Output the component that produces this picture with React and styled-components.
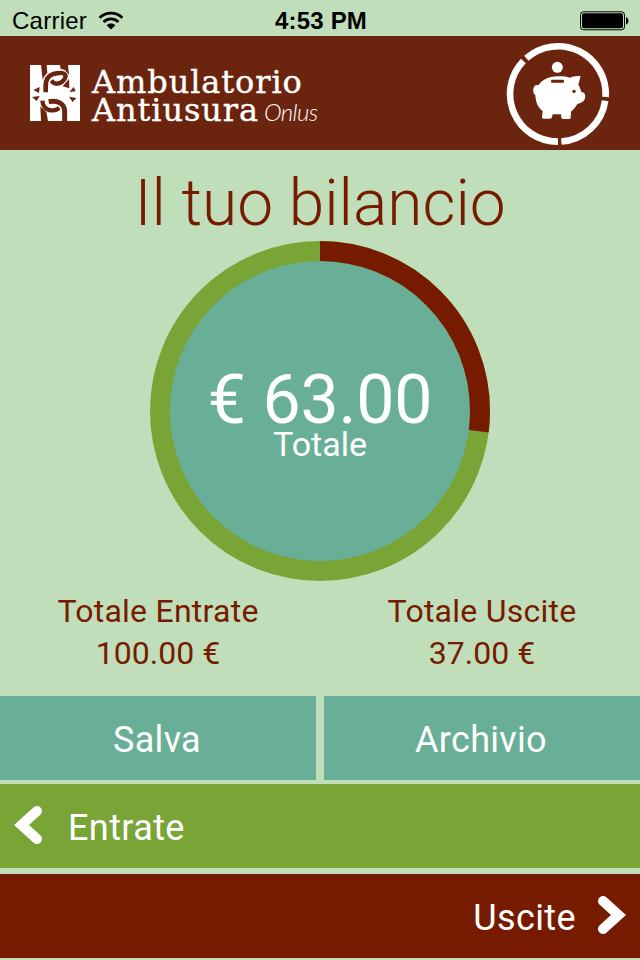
import React from "react";
import styled, { createGlobalStyle } from "styled-components";

const income = 100;
const expenses = 37;

const formatAmount = (value) => value.toFixed(2);

function WifiIcon() {
  return (
    <svg width="26" height="20" viewBox="0 0 26 20">
      <g fill="none" stroke="#000" strokeWidth="2.7">
        <path d="M1.6 6.7 C8 0.5 18 0.5 24.4 6.7" />
        <path d="M5.5 10.9 C10 6.8 16 6.8 20.5 10.9" />
      </g>
      <path d="M8.6 14.2 C11.2 11.9 14.8 11.9 17.4 14.2 L13 18.6 Z" />
    </svg>
  );
}

function BatteryIcon() {
  return (
    <svg width="50" height="20" viewBox="0 0 50 20">
      <rect x="0.5" y="0.8" width="44" height="18" rx="3" fill="none" stroke="#000" />
      <rect x="2" y="2.3" width="41" height="15" rx="1.8" />
      <path d="M46 6.2 C49.3 7 49.3 12.6 46 13.4 Z" />
    </svg>
  );
}

function ChainMark() {
  return (
    <svg width="50" height="56" viewBox="0 0 150 168">
      <rect width="150" height="168" fill="#fff" />
      <g fill="#6b240e">
        <path d="M33 0 H50 L52 24 L38 44 Z" />
        <path d="M90 0 H114 L117 30 L104 14 L92 12 Z" />
        <path d="M117 42 L118 70 L98 64 Z" />
        <path d="M31 124 L49 142 L54 168 H33 Z" />
        <path d="M10 75 L29 66 L27 84 Z" />
        <path d="M6 96 L29 93 L20 108 Z" />
        <path d="M118 81 L131 66 L137 79 Z" />
        <path d="M117 95 L139 99 L128 111 Z" />
      </g>
      <g fill="none">
        <path d="M64 46 C72 61 90 58 101 46 C113 32 104 21 88 24" stroke="#6b240e" strokeWidth="13" />
        <path d="M47 82 V62 C47 38 62 24 90 24" stroke="#fff" strokeWidth="23" />
        <path d="M47 82 V62 C47 38 62 24 90 24" stroke="#6b240e" strokeWidth="14" />
        <path d="M37 107 C38 124 48 135 64 136 C76 137 85 133 90 125" stroke="#6b240e" strokeWidth="13" />
        <path d="M104 168 V139 C103 115 83 105 56 110" stroke="#fff" strokeWidth="24" />
        <path d="M104 168 V139 C103 115 83 105 56 110" stroke="#6b240e" strokeWidth="15" />
      </g>
    </svg>
  );
}

function PiggyIcon() {
  return (
    <svg width="120" height="114" viewBox="0 0 360 342">
      <g fill="none" stroke="#fff" strokeWidth="20">
        <path d="M79 67 A143 143 0 0 1 316.9 183" />
        <path d="M315.4 194 A143 143 0 0 1 184 316.6" />
        <path d="M174 317 A143 143 0 0 1 70 75" />
      </g>
      <g fill="#fff">
        <circle cx="172" cy="94" r="16.5" />
        <path d="M115 148 C127 130 149 121 174 121 C190 121 202 122 210 125 C220 121 231 120 242 120 L235 146 C240 153 242 161 244 168 L252 170 C256 175 257 182 254 190 C251 198 241 202 232 204 C226 215 219 222 213 227 L212 245 Q212 249 207 249 H189 Q184 249 184 244 L183 235 H158 L156 244 Q155 248 150 248 H131 Q126 248 126 243 L128 225 C114 215 107 199 106 177 C97 174 97 149 109 147 Z" />
      </g>
      <rect x="153" y="131" width="39" height="9" rx="3" fill="#6b240e" />
      <circle cx="222" cy="166" r="5" fill="#6b240e" />
    </svg>
  );
}

function Chevron({ flip }) {
  return (
    <svg width="28" height="38" viewBox="0 0 28 38">
      <path
        d="M23 5 L7.5 19 L23 33"
        transform={flip ? "translate(28 0) scale(-1 1)" : undefined}
        fill="none"
        stroke="#fff"
        strokeWidth="10"
        strokeLinecap="round"
        strokeLinejoin="miter"
      />
    </svg>
  );
}

function BalanceRing({ share }) {
  const radius = 160;
  const length = 2 * Math.PI * radius;

  return (
    <svg width="340" height="340" viewBox="0 0 340 340">
      <circle cx="170" cy="170" r="151" fill="#69ae96" />
      <circle cx="170" cy="170" r={radius} fill="none" stroke="#79a537" strokeWidth="20" />
      <circle
        cx="170"
        cy="170"
        r={radius}
        fill="none"
        stroke="#771b00"
        strokeWidth="20"
        strokeDasharray={`${length * share} ${length}`}
        transform="rotate(-90 170 170)"
      />
    </svg>
  );
}

function App() {
  return (
    <Screen>
      <GlobalStyle />
      <StatusBar>
        <Carrier>
          <span>Carrier</span>
          <WifiIcon />
        </Carrier>
        <Clock>4:53 PM</Clock>
        <Battery>
          <BatteryIcon />
        </Battery>
      </StatusBar>
      <Header>
        <Brand>
          <ChainMark />
          <BrandName>
            <BrandLine>Ambulatorio</BrandLine>
            <BrandLine>
              Antiusura<Onlus>Onlus</Onlus>
            </BrandLine>
          </BrandName>
        </Brand>
        <PiggyIcon />
      </Header>
      <Title>Il tuo bilancio</Title>
      <Balance>
        <BalanceRing share={expenses / (income + expenses)} />
        <BalanceText>
          <BalanceAmount>€ {formatAmount(income - expenses)}</BalanceAmount>
          <BalanceLabel>Totale</BalanceLabel>
        </BalanceText>
      </Balance>
      <Totals>
        <Total>
          <p>Totale Entrate</p>
          <p>{formatAmount(income)} €</p>
        </Total>
        <Total>
          <p>Totale Uscite</p>
          <p>{formatAmount(expenses)} €</p>
        </Total>
      </Totals>
      <Actions>
        <ActionButton>Salva</ActionButton>
        <ActionButton>Archivio</ActionButton>
      </Actions>
      <NavRow $color="#79a537">
        <Chevron />
        <span>Entrate</span>
      </NavRow>
      <NavRow $color="#771b00" $end>
        <span>Uscite</span>
        <Chevron flip />
      </NavRow>
    </Screen>
  );
}

export default App;

const GlobalStyle = createGlobalStyle`
  * {
    box-sizing: border-box;
    margin: 0;
    padding: 0;
  }

  body {
    background: #c0deb9;
    font-family: Roboto, sans-serif;
  }

  svg {
    display: block;
    flex-shrink: 0;
  }
`;

const Screen = styled.div`
  display: flex;
  flex-direction: column;
  width: 640px;
  height: 960px;
  overflow: hidden;
  background: #c0deb9;
`;

const StatusBar = styled.div`
  display: grid;
  grid-template-columns: 1fr auto 1fr;
  align-items: center;
  height: 36px;
  padding: 5px 10px 0 12px;
  color: #000;
  font: 24px/30px "Liberation Sans", sans-serif;
`;

const Carrier = styled.div`
  display: flex;
  align-items: center;
  gap: 11px;
  letter-spacing: 0.25px;
`;

const Clock = styled.div`
  font-weight: bold;
  letter-spacing: 0.2px;
`;

const Battery = styled.div`
  justify-self: end;
`;

const Header = styled.header`
  display: flex;
  align-items: flex-start;
  justify-content: space-between;
  height: 114px;
  padding: 0 20px 0 30px;
  background: #6b240e;
`;

const Brand = styled.div`
  display: flex;
  gap: 12px;
  padding-top: 29px;
`;

const BrandName = styled.div`
  color: #fff;
`;

const BrandLine = styled.div`
  display: flex;
  align-items: baseline;
  height: 28px;
  font: 32px/34px "DejaVu Serif", serif;
  letter-spacing: 0.9px;
  white-space: nowrap;
  -webkit-text-stroke: 0.4px #fff;
`;

const Onlus = styled.span`
  margin-left: 5px;
  font: italic 300 24px/28px Lato, sans-serif;
  letter-spacing: -0.6px;
  -webkit-text-stroke: 0;
`;

const Title = styled.h1`
  height: 91px;
  padding-top: 14px;
  color: #771b00;
  font-size: 64px;
  font-weight: 300;
  line-height: 80px;
  text-align: center;
`;

const Balance = styled.section`
  display: grid;
  justify-content: center;
  height: 340px;

  > * {
    grid-area: 1 / 1;
  }
`;

const BalanceText = styled.div`
  padding-top: 128px;
  color: #fff;
  text-align: center;
`;

const BalanceAmount = styled.p`
  font-size: 68px;
  line-height: 62px;
  letter-spacing: -0.2px;
`;

const BalanceLabel = styled.p`
  font-size: 34px;
  line-height: 27px;
`;

const Totals = styled.section`
  display: grid;
  grid-template-columns: 316px 316px;
  gap: 8px;
  height: 115px;
  padding-top: 9px;
  color: #771b00;
  font-size: 32px;
  line-height: 42px;
  text-align: center;
`;

const Total = styled.div`
  > p:first-child {
    letter-spacing: 0.25px;
  }
`;

const Actions = styled.div`
  display: grid;
  grid-template-columns: 1fr 1fr;
  gap: 8px;
  height: 84px;
`;

const ActionButton = styled.button`
  padding: 3px 2px 0 0;
  border: none;
  background: #69ae96;
  color: #fff;
  font: 36px/40px Roboto, sans-serif;
  letter-spacing: 0.3px;
`;

const NavRow = styled.div`
  display: flex;
  align-items: center;
  justify-content: ${({ $end }) => ($end ? "flex-end" : "flex-start")};
  gap: ${({ $end }) => ($end ? "22px" : "26px")};
  height: 84px;
  margin-top: ${({ $end }) => ($end ? "6px" : "4px")};
  padding: 0 14px;
  background: ${({ $color }) => $color};
  color: #fff;
  font-size: 36px;
  line-height: 40px;
  letter-spacing: 0.4px;

  > svg {
    margin-bottom: 2px;
  }

  > span {
    padding-top: 4px;
  }
`;
